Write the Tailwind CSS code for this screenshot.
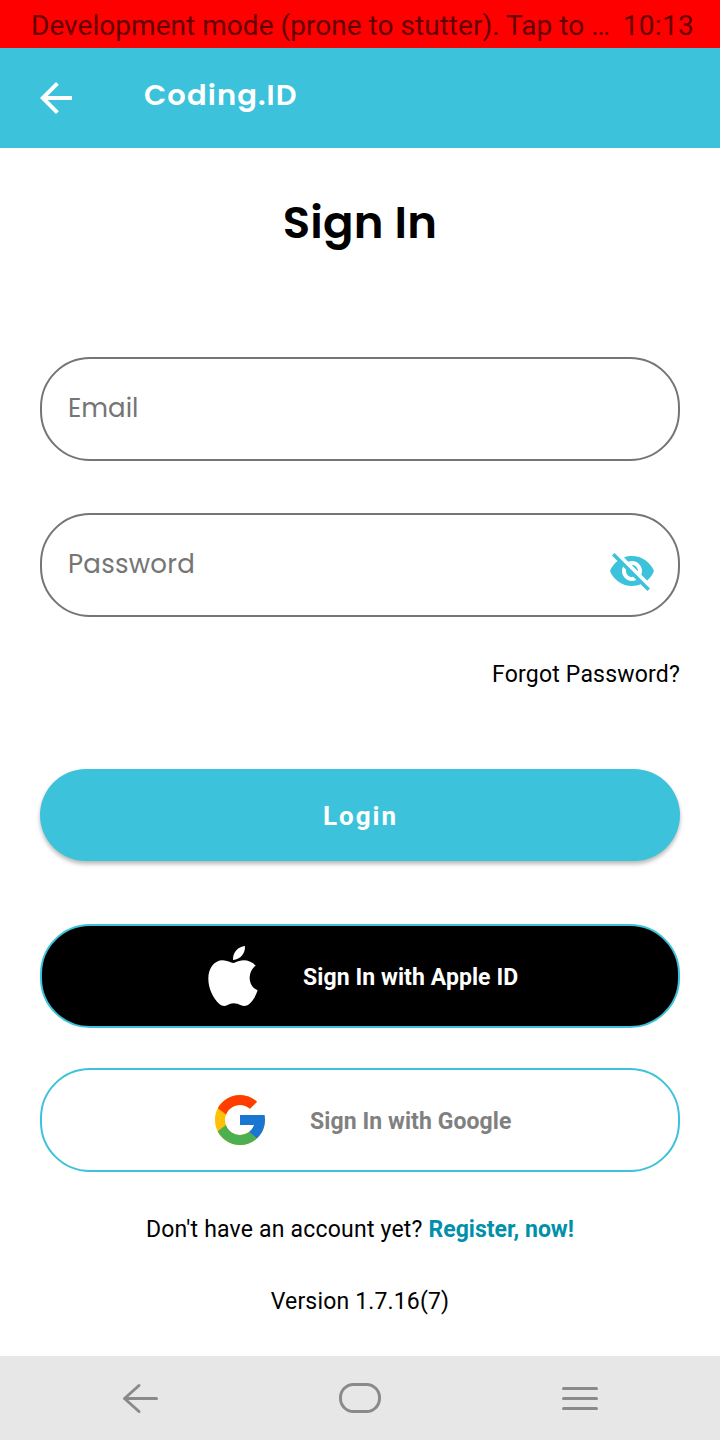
<!DOCTYPE html>
<html lang="en">
<head>
<meta charset="utf-8">
<title>Coding.ID - Sign In</title>
<script src="https://cdn.jsdelivr.net/npm/@tailwindcss/browser@4"></script>
</head>
<body class="bg-white">
<div class="flex h-[1440px] w-[720px] flex-col overflow-hidden bg-white font-[Roboto,sans-serif] text-black">
  <div class="flex h-12 shrink-0 items-center justify-between bg-[#ff0000] pt-1 pr-[26px] pl-[31px] text-[28px] leading-[44px] whitespace-nowrap text-[#660000]">
    <span class="tracking-[0.04px]">Development mode (prone to stutter). Tap to …</span>
    <span class="tracking-[0.3px]">10:13</span>
  </div>
  <header class="flex h-[100px] shrink-0 items-center bg-[#3dc2dc] pl-8 text-white">
    <svg class="size-12" viewBox="0 0 24 24" fill="currentColor"><path d="M20 11H7.83l5.59-5.59L12 4l-8 8 8 8 1.41-1.41L7.83 13H20v-2z"/></svg>
    <span class="mb-1.5 ml-16 font-[Poppins,Inter,sans-serif] text-[29px] leading-10 font-semibold tracking-[1.1px]">Coding.ID</span>
  </header>
  <main class="flex h-[1208px] shrink-0 flex-col px-10">
    <h1 class="mt-[41px] text-center font-[Poppins,Inter,sans-serif] text-[45px] leading-[68px] font-semibold tracking-[0.2px]">Sign In</h1>
    <div class="mt-[100px] flex h-[104px] items-center rounded-[50px] border-2 border-[#757575] pl-[26px] text-[#757575]">
      <span class="mb-0.5 font-[Poppins,Inter,sans-serif] text-[26px] leading-9">Email</span>
    </div>
    <div class="mt-[52px] flex h-[104px] items-center justify-between rounded-[50px] border-2 border-[#757575] pr-[22px] pl-[26px] text-[#757575]">
      <span class="mb-0.5 font-[Poppins,Inter,sans-serif] text-[26px] leading-9 tracking-[0.25px]">Password</span>
      <svg class="mt-3 size-12 text-[#3dc2dc]" viewBox="0 0 24 24" fill="currentColor"><path d="M12 7c2.76 0 5 2.24 5 5 0 .65-.13 1.26-.36 1.83l2.92 2.92c1.51-1.26 2.7-2.89 3.43-4.75-1.73-4.39-6-7.5-11-7.5-1.4 0-2.74.25-3.98.7l2.16 2.16C10.74 7.13 11.35 7 12 7zM2 4.27l2.28 2.28.46.46C3.08 8.3 1.78 10.02 1 12c1.73 4.39 6 7.5 11 7.5 1.55 0 3.03-.3 4.38-.84l.42.42L19.73 22 21 20.73 3.27 3 2 4.27zM7.53 9.8l1.55 1.55c-.05.21-.08.43-.08.65 0 1.66 1.34 3 3 3 .22 0 .44-.03.65-.08l1.55 1.55c-.67.33-1.41.53-2.2.53-2.76 0-5-2.24-5-5 0-.79.2-1.53.53-2.2zm4.31-.78l3.15 3.15.02-.16c0-1.66-1.34-3-3-3l-.17.01z"/></svg>
    </div>
    <a class="mt-[42px] self-end text-[23px] leading-8 tracking-[0.19px]">Forgot Password?</a>
    <button class="mt-[78px] h-[92px] shrink-0 rounded-[46px] bg-[#3dc2dc] pt-0.5 pl-px text-[26px] font-bold tracking-[2px] text-white shadow-[0_3px_4px_rgba(0,0,0,0.28)]">Login</button>
    <button class="mt-[63px] flex h-[104px] shrink-0 items-center rounded-[50px] border-2 border-[#3dc2dc] bg-black pl-[166px] text-white">
      <svg class="h-[60px] w-[50px]" viewBox="54 78 150 180" fill="currentColor"><path d="M130 129C136 129 146 121 160 121C175 121 188 127 197 137C185 145 179 160 179 174C179 191 189 205 203 211C198 227 189 242 177 253C170 259 161 259 153 256C138 248 124 248 111 256C103 260 94 257 88 252C68 233 55 204 55 176C55 145 73 121 98 121C112 121 122 129 130 129Z"/><path d="M129 120C128 98 143 80 165 78C166 100 152 118 129 120Z"/></svg>
      <span class="mt-1 ml-[45px] text-[23px] leading-8 font-bold tracking-[0.08px] whitespace-nowrap">Sign In with Apple ID</span>
    </button>
    <button class="mt-10 flex h-[104px] shrink-0 items-center rounded-[50px] border-2 border-[#3dc2dc] bg-white pl-[168px] text-[#808080]">
      <svg class="size-[60px]" viewBox="0 0 48 48"><path fill="#FFC107" d="M43.611 20.083H42V20H24v8h11.303c-1.649 4.657-6.08 8-11.303 8-6.627 0-12-5.373-12-12s5.373-12 12-12c3.059 0 5.842 1.154 7.961 3.039l5.657-5.657C34.046 6.053 29.268 4 24 4 12.955 4 4 12.955 4 24s8.955 20 20 20 20-8.955 20-20c0-1.341-.138-2.65-.389-3.917z"/><path fill="#FF3D00" d="M6.306 14.691l6.571 4.819C14.655 15.108 18.961 12 24 12c3.059 0 5.842 1.154 7.961 3.039l5.657-5.657C34.046 6.053 29.268 4 24 4 16.318 4 9.656 8.337 6.306 14.691z"/><path fill="#4CAF50" d="M24 44c5.166 0 9.86-1.977 13.409-5.192l-6.19-5.238A11.91 11.91 0 0 1 24 36c-5.202 0-9.619-3.317-11.283-7.946l-6.522 5.025C9.505 39.556 16.227 44 24 44z"/><path fill="#1976D2" d="M43.611 20.083H42V20H24v8h11.303a12.04 12.04 0 0 1-4.087 5.571l.003-.002 6.19 5.238C36.971 39.205 44 34 44 24c0-1.341-.138-2.65-.389-3.917z"/></svg>
      <span class="mt-1 ml-10 text-[23px] leading-8 font-bold tracking-[0.08px] whitespace-nowrap">Sign In with Google</span>
    </button>
    <p class="mt-[42px] text-center text-[23px] leading-8 tracking-[0.2px] whitespace-nowrap">Don't have an account yet? <a class="font-bold tracking-normal text-[#0090ab]">Register, now!</a></p>
    <p class="mt-10 text-center text-[23px] leading-8 tracking-[0.16px]">Version 1.7.16(7)</p>
  </main>
  <nav class="flex h-[84px] shrink-0 items-center justify-around bg-[#e7e7e7] px-[30px] text-[#8a8a8a]">
    <svg class="h-[42px] w-[44px]" viewBox="0 0 44 42" fill="none" stroke="currentColor" stroke-width="3" stroke-linecap="round" stroke-linejoin="round"><path d="M38.5 21.5H6.5M21 8.5L6.5 21.5L21 34.5"/></svg>
    <svg class="h-[42px] w-[44px]" viewBox="0 0 44 42" fill="none" stroke="currentColor" stroke-width="3"><rect x="2.5" y="7.5" width="39" height="27" rx="13"/></svg>
    <svg class="h-[42px] w-[44px]" viewBox="0 0 44 42" fill="none" stroke="currentColor" stroke-width="3" stroke-linecap="round"><path d="M5.500 11.500H38.500M5.500 21.500H38.500M5.500 31.500H38.500"/></svg>
  </nav>
</div>
</body>
</html>
